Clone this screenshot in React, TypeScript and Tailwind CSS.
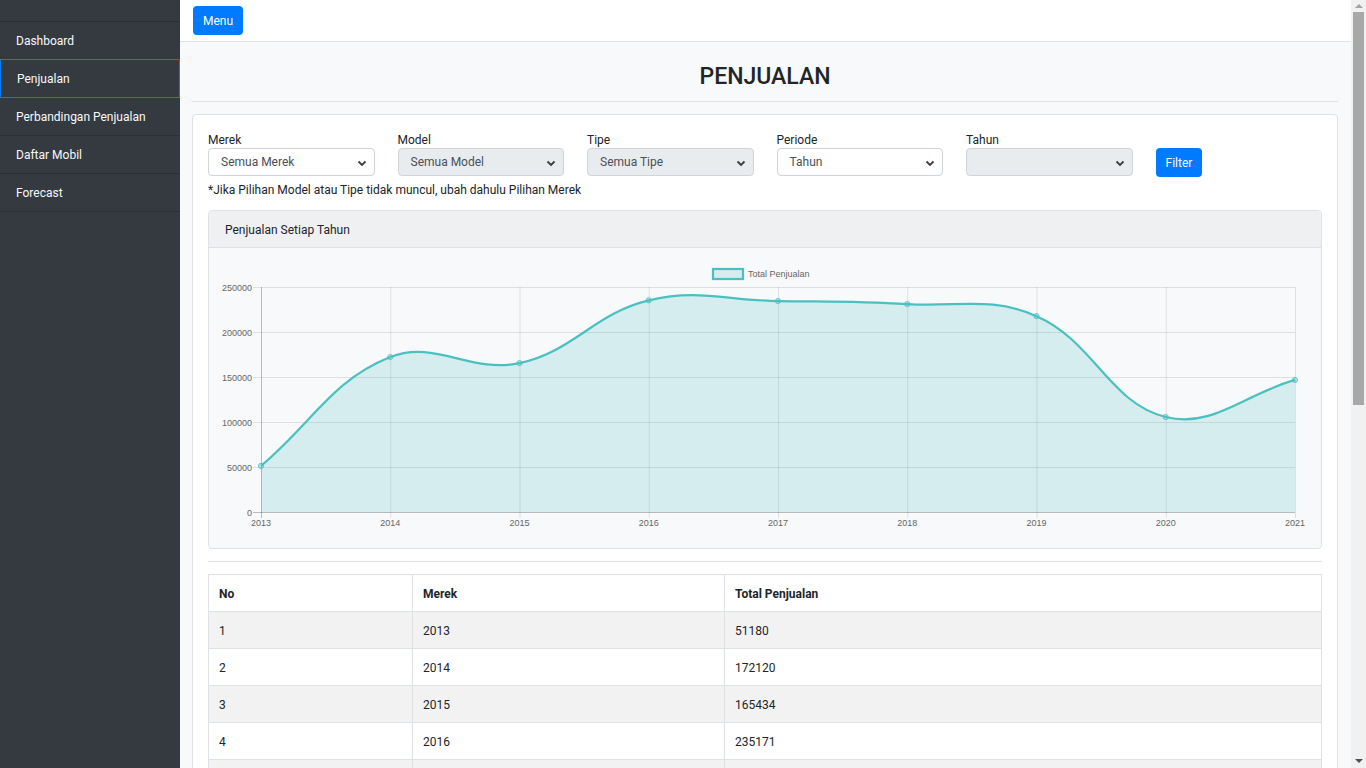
import React from "react";

type Pt = { x: number; y: number };

const menu = ["Dashboard", "Penjualan", "Perbandingan Penjualan", "Daftar Mobil", "Forecast"];

const sales = [
  { year: 2013, total: 51180 },
  { year: 2014, total: 172120 },
  { year: 2015, total: 165434 },
  { year: 2016, total: 235171 },
  { year: 2017, total: 234410 },
  { year: 2018, total: 231016 },
  { year: 2019, total: 217630 },
  { year: 2020, total: 105512 },
  { year: 2021, total: 146750 },
];

// chart geometry, relative to the card body
const left = 52;
const right = 1086;
const top = 39;
const bottom = 264;
const step = (right - left) / (sales.length - 1);
const yOf = (v: number) => bottom - (v / 250000) * (bottom - top);

function splinePath(pts: Pt[], t = 0.4) {
  const clamp = (p: Pt) => ({
    x: Math.min(Math.max(p.x, left), right),
    y: Math.min(Math.max(p.y, top), bottom),
  });
  const cps = pts.map((cur, i) => {
    const prev = pts[i - 1] ?? cur;
    const next = pts[i + 1] ?? cur;
    const d01 = Math.hypot(cur.x - prev.x, cur.y - prev.y);
    const d12 = Math.hypot(next.x - cur.x, next.y - cur.y);
    let s01 = d01 / (d01 + d12);
    let s12 = d12 / (d01 + d12);
    if (isNaN(s01)) s01 = 0;
    if (isNaN(s12)) s12 = 0;
    const fa = t * s01;
    const fb = t * s12;
    return {
      prev: clamp({ x: cur.x - fa * (next.x - prev.x), y: cur.y - fa * (next.y - prev.y) }),
      next: clamp({ x: cur.x + fb * (next.x - prev.x), y: cur.y + fb * (next.y - prev.y) }),
    };
  });
  let d = `M${pts[0].x},${pts[0].y}`;
  for (let i = 1; i < pts.length; i++) {
    const a = cps[i - 1].next;
    const b = cps[i].prev;
    d += ` C${a.x},${a.y} ${b.x},${b.y} ${pts[i].x},${pts[i].y}`;
  }
  return d;
}

function SalesChart() {
  const pts = sales.map((s, i) => ({ x: left + i * step, y: yOf(s.total) }));
  const line = splinePath(pts);
  const area = `${line} L${right},${bottom} L${left},${bottom} Z`;
  const ticks = [0, 50000, 100000, 150000, 200000, 250000];

  return (
    <svg width="1112" height="300" viewBox="0 0 1112 300" className="block">
      <g fontFamily="'Liberation Sans', Arial, sans-serif" fontSize="9" fill="#666">
        {/* legend */}
        <rect x="504" y="21" width="30" height="10" fill="rgba(75,192,192,0.2)" stroke="rgb(75,192,192)" strokeWidth="2.2" />
        <text x="539" y="28.5">Total Penjualan</text>

        {ticks.map((v) => (
          <g key={v}>
            <line x1="44" x2={right} y1={yOf(v) + 0.5} y2={yOf(v) + 0.5} stroke={v === 0 ? "rgba(0,0,0,0.25)" : "rgba(0,0,0,0.1)"} />
            <text x="43" y={yOf(v) + 3.5} textAnchor="end">{v}</text>
          </g>
        ))}
        {sales.map((s, i) => (
          <g key={s.year}>
            <line x1={left + i * step + 0.5} x2={left + i * step + 0.5} y1={top} y2={bottom + 6} stroke={i === 0 ? "rgba(0,0,0,0.25)" : "rgba(0,0,0,0.1)"} />
            <text x={left + i * step} y="277.5" textAnchor="middle">{s.year}</text>
          </g>
        ))}
      </g>
      <path d={area} fill="rgba(75,192,192,0.2)" />
      <path d={line} fill="none" stroke="rgb(75,192,192)" strokeWidth="2.2" />
      {pts.map((p, i) => (
        <circle key={i} cx={p.x} cy={p.y} r="2.6" fill="rgba(75,192,192,0.35)" stroke="rgba(75,192,192,0.8)" strokeWidth="1" />
      ))}
    </svg>
  );
}

function Chevron() {
  return (
    <svg width="10" height="7" viewBox="0 0 10 7" className="absolute right-[7px] top-[11px]">
      <polyline points="1.5,1.5 5,5 8.5,1.5" fill="none" stroke="#3c3c3c" strokeWidth="1.8" />
    </svg>
  );
}

function SelectBox({ label, value, disabled }: { label: string; value: string; disabled?: boolean }) {
  return (
    <div>
      <div className="h-[18px] leading-[21px]">{label}</div>
      <div
        className={`relative h-[28px] rounded-[4px] border border-[#ced4da] pl-[12px] leading-[27px] text-[#495057] ${
          disabled ? "bg-[#e9ecef]" : "bg-white"
        }`}
      >
        {value}
        <Chevron />
      </div>
    </div>
  );
}

function Scrollbar() {
  return (
    <div className="flex w-[15px] shrink-0 flex-col bg-[#f1f1f1]">
      <div className="flex h-[12px] items-center justify-center">
        <svg width="8" height="4" viewBox="0 0 8 4">
          <polygon points="0,4 4,0 8,4" fill="#a3a3a3" />
        </svg>
      </div>
      <div className="mx-[2px] h-[393px] bg-[#a8a8a8]" />
      <div className="flex-1" />
      <div className="flex h-[15px] items-center justify-center">
        <svg width="8" height="4" viewBox="0 0 8 4">
          <polygon points="0,0 8,0 4,4" fill="#505050" />
        </svg>
      </div>
    </div>
  );
}

export default function App() {
  return (
    <div className="flex h-screen overflow-hidden bg-[#f8f9fa] font-['Roboto',sans-serif] text-[12px] text-[#212529]">
      <aside className="w-[180px] shrink-0 bg-[#343a40] pt-[21px]">
        <div className="border-t border-[#2b3035]">
          {menu.map((item) => (
            <div
              key={item}
              className={`h-[38px] border-b pl-4 leading-[39px] text-[#f8f9fa] ${
                item === "Penjualan" ? "-mt-px h-[39px] border border-[#007bff] leading-[39px]" : "border-[#2b3035]"
              }`}
            >
              {item}
            </div>
          ))}
        </div>
      </aside>

      <div className="min-w-0 flex-1 overflow-hidden">
        <nav className="flex h-[42px] items-center border-b border-[#dee2e6] bg-white px-[13px]">
          <button className="h-[29px] rounded-[4px] bg-[#007bff] px-[10px] text-white">Menu</button>
        </nav>

        <main className="pl-3 pr-[13px]">
          <div className="flex h-[60px] items-center justify-center border-b border-[#dee2e6] pt-[11px]">
            <h1 className="text-[23px] font-medium text-[#212529]">PENJUALAN</h1>
          </div>

          <div className="mt-[12px] rounded-[4px] border border-[#dee2e6] bg-white p-[15px]">
            <div className="grid grid-cols-6 gap-x-[23px]">
              <SelectBox label="Merek" value="Semua Merek" />
              <SelectBox label="Model" value="Semua Model" disabled />
              <SelectBox label="Tipe" value="Semua Tipe" disabled />
              <SelectBox label="Periode" value="Tahun" />
              <SelectBox label="Tahun" value="" disabled />
              <div className="pt-[18px]">
                <button className="h-[29px] rounded-[4px] bg-[#007bff] px-[10px] text-white">Filter</button>
              </div>
            </div>
            <p className="mt-[4px] leading-[18px]">*Jika Pilihan Model atau Tipe tidak muncul, ubah dahulu Pilihan Merek</p>

            <div className="mt-[11px] overflow-hidden rounded-[4px] border border-[#dee2e6] bg-[#f8f9fa]">
              <div className="h-[37px] border-b border-[#dee2e6] bg-[#eff0f2] px-4 leading-[39px]">Penjualan Setiap Tahun</div>
              <SalesChart />
            </div>

            <div className="mt-[12px] border-t border-[#dee2e6]" />

            <table className="mt-[12px] w-full border-collapse border border-[#dee2e6]">
              <thead>
                <tr>
                  <th className="w-[204px] border border-[#dee2e6] px-[10px] pt-[10px] pb-[8px] text-left font-bold leading-[18px]">No</th>
                  <th className="w-[312px] border border-[#dee2e6] px-[10px] pt-[10px] pb-[8px] text-left font-bold leading-[18px]">Merek</th>
                  <th className="border border-[#dee2e6] px-[10px] pt-[10px] pb-[8px] text-left font-bold leading-[18px]">Total Penjualan</th>
                </tr>
              </thead>
              <tbody>
                {sales.map((s, i) => (
                  <tr key={s.year} className={i % 2 === 0 ? "bg-[#f2f2f2]" : "bg-white"}>
                    <td className="border border-[#dee2e6] px-[10px] pt-[10px] pb-[8px] leading-[18px]">{i + 1}</td>
                    <td className="border border-[#dee2e6] px-[10px] pt-[10px] pb-[8px] leading-[18px]">{s.year}</td>
                    <td className="border border-[#dee2e6] px-[10px] pt-[10px] pb-[8px] leading-[18px]">{s.total}</td>
                  </tr>
                ))}
              </tbody>
            </table>
          </div>
        </main>
      </div>

      <Scrollbar />
    </div>
  );
}
